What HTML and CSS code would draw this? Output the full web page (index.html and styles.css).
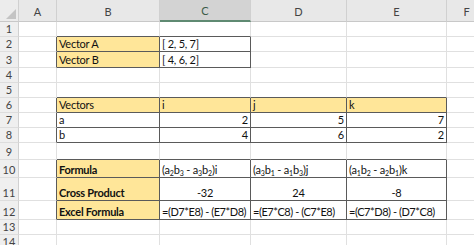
FILE: index.html
```html
<!DOCTYPE html>
<html>
<head>
<meta charset="utf-8">
<link rel="stylesheet" href="styles.css">
</head>
<body>
<div class="sheet">
  <!-- column headers -->
  <div class="corner"><span class="tri"></span></div>
  <div class="ch">A</div>
  <div class="ch">B</div>
  <div class="ch sel">C</div>
  <div class="ch">D</div>
  <div class="ch">E</div>
  <div class="ch">F</div>

  <!-- row 1 -->
  <div class="rh">1</div>
  <div class="c"></div><div class="c bb"></div><div class="c bb"></div><div class="c"></div><div class="c"></div><div class="c"></div>
  <!-- row 2 -->
  <div class="rh">2</div>
  <div class="c br"></div><div class="c t y"><span>Vector A</span></div><div class="c t"><span>[ 2, 5, 7]</span></div><div class="c"></div><div class="c"></div><div class="c"></div>
  <!-- row 3 -->
  <div class="rh">3</div>
  <div class="c br"></div><div class="c t y"><span>Vector B</span></div><div class="c t"><span>[ 4, 6, 2]</span></div><div class="c"></div><div class="c"></div><div class="c"></div>
  <!-- row 4 -->
  <div class="rh">4</div>
  <div class="c"></div><div class="c"></div><div class="c"></div><div class="c"></div><div class="c"></div><div class="c"></div>
  <!-- row 5 -->
  <div class="rh">5</div>
  <div class="c"></div><div class="c bb"></div><div class="c bb"></div><div class="c bb"></div><div class="c bb"></div><div class="c"></div>
  <!-- row 6 -->
  <div class="rh">6</div>
  <div class="c br"></div><div class="c t y"><span>Vectors</span></div><div class="c t y"><span>i</span></div><div class="c t y"><span>j</span></div><div class="c t y"><span>k</span></div><div class="c"></div>
  <!-- row 7 -->
  <div class="rh">7</div>
  <div class="c br"></div><div class="c t"><span>a</span></div><div class="c t num"><span>2</span></div><div class="c t num"><span>5</span></div><div class="c t num"><span>7</span></div><div class="c"></div>
  <!-- row 8 -->
  <div class="rh">8</div>
  <div class="c br"></div><div class="c t"><span>b</span></div><div class="c t num"><span>4</span></div><div class="c t num"><span>6</span></div><div class="c t num"><span>2</span></div><div class="c"></div>
  <!-- row 9 -->
  <div class="rh">9</div>
  <div class="c"></div><div class="c bb"></div><div class="c bb"></div><div class="c bb"></div><div class="c bb"></div><div class="c"></div>
  <!-- row 10 -->
  <div class="rh">10</div>
  <div class="c br"></div>
  <div class="c t y b"><span>Formula</span></div>
  <div class="c t"><span>(a<sub>2</sub>b<sub>3</sub> - a<sub>3</sub>b<sub>2</sub>)i</span></div>
  <div class="c t"><span>(a<sub>3</sub>b<sub>1</sub> - a<sub>1</sub>b<sub>3</sub>)j</span></div>
  <div class="c t"><span>(a<sub>1</sub>b<sub>2</sub> - a<sub>2</sub>b<sub>1</sub>)k</span></div>
  <div class="c"></div>
  <!-- row 11 -->
  <div class="rh">11</div>
  <div class="c br"></div>
  <div class="c t y b"><span>Cross Product</span></div>
  <div class="c t mid"><span>-32</span></div>
  <div class="c t mid"><span>24</span></div>
  <div class="c t mid"><span>-8</span></div>
  <div class="c"></div>
  <!-- row 12 -->
  <div class="rh">12</div>
  <div class="c br"></div>
  <div class="c t y b"><span>Excel Formula</span></div>
  <div class="c t f"><span>=(D7*E8) - (E7*D8)</span></div>
  <div class="c t f"><span>=(E7*C8) - (C7*E8)</span></div>
  <div class="c t f"><span>=(C7*D8) - (D7*C8)</span></div>
  <div class="c"></div>
  <!-- row 13 -->
  <div class="rh">13</div>
  <div class="c"></div><div class="c"></div><div class="c"></div><div class="c"></div><div class="c"></div><div class="c"></div>
  <!-- row 14 -->
  <div class="rh">14</div>
  <div class="c"></div><div class="c"></div><div class="c"></div><div class="c"></div><div class="c"></div><div class="c"></div>
</div>
</body>
</html>
```

FILE: styles.css
```css
html, body {
  margin: 0;
  padding: 0;
  background: #ffffff;
  overflow: hidden;
}

.sheet {
  display: grid;
  grid-template-columns: 19px 38px 103px 91px 96px 100px 40px;
  grid-template-rows: 22px 15px 15px 16px 15px 15px 15px 15px 15px 17px 18px 23px 19px 15px 15px;
  width: 487px;
  font-family: Lato, "Open Sans", sans-serif;
  font-size: 11px;
  letter-spacing: -0.25px;
  color: #111;
}

/* header strip */
.corner, .ch {
  background: #e8e8e8;
  border-bottom: 1px solid #c8c8c8;
  border-right: 1px solid #d0d0d0;
  box-sizing: border-box;
}

.corner {
  position: relative;
  background: #ececec;
}

.tri {
  position: absolute;
  right: 2px;
  bottom: 2px;
  width: 0;
  height: 0;
  border-left: 10px solid transparent;
  border-bottom: 10px solid #c4c4c4;
}

.ch {
  display: flex;
  align-items: flex-end;
  justify-content: center;
  padding-bottom: 3px;
  color: #444;
  letter-spacing: 0;
}

.ch.sel {
  background: #d3d3d3;
  border-bottom: 2px solid #5f8a72;
  color: #3b5b48;
}

/* row numbers */
.rh {
  background: #efefef;
  border-bottom: 1px solid #dddddd;
  border-right: 1px solid #d0d0d0;
  box-sizing: border-box;
  color: #444;
  letter-spacing: 0;
  display: flex;
  align-items: flex-end;
  justify-content: center;
  padding-bottom: 1px;
}

/* cells */
.c {
  box-sizing: border-box;
  border-right: 1px solid #e0e0e0;
  border-bottom: 1px solid #e0e0e0;
  white-space: nowrap;
  min-width: 0;
}

.c.t {
  border-right-color: #5a5a5a;
  border-bottom-color: #5a5a5a;
  display: flex;
  align-items: flex-end;
  padding: 0 2px;
  line-height: 14px;
}

.c.br { border-right-color: #5a5a5a; }
.c.bb { border-bottom-color: #5a5a5a; }

.y { background: #ffe699; }
.b { font-weight: bold; }
.num { justify-content: flex-end; }
.mid { justify-content: center; }

/* formula strings are long; tighten them so they stay inside their cell */
.f {
  letter-spacing: -0.45px;
  padding-left: 1px;
}

sub {
  font-size: 7px;
  letter-spacing: 0;
  vertical-align: -2px;
  line-height: 0;
}
```
